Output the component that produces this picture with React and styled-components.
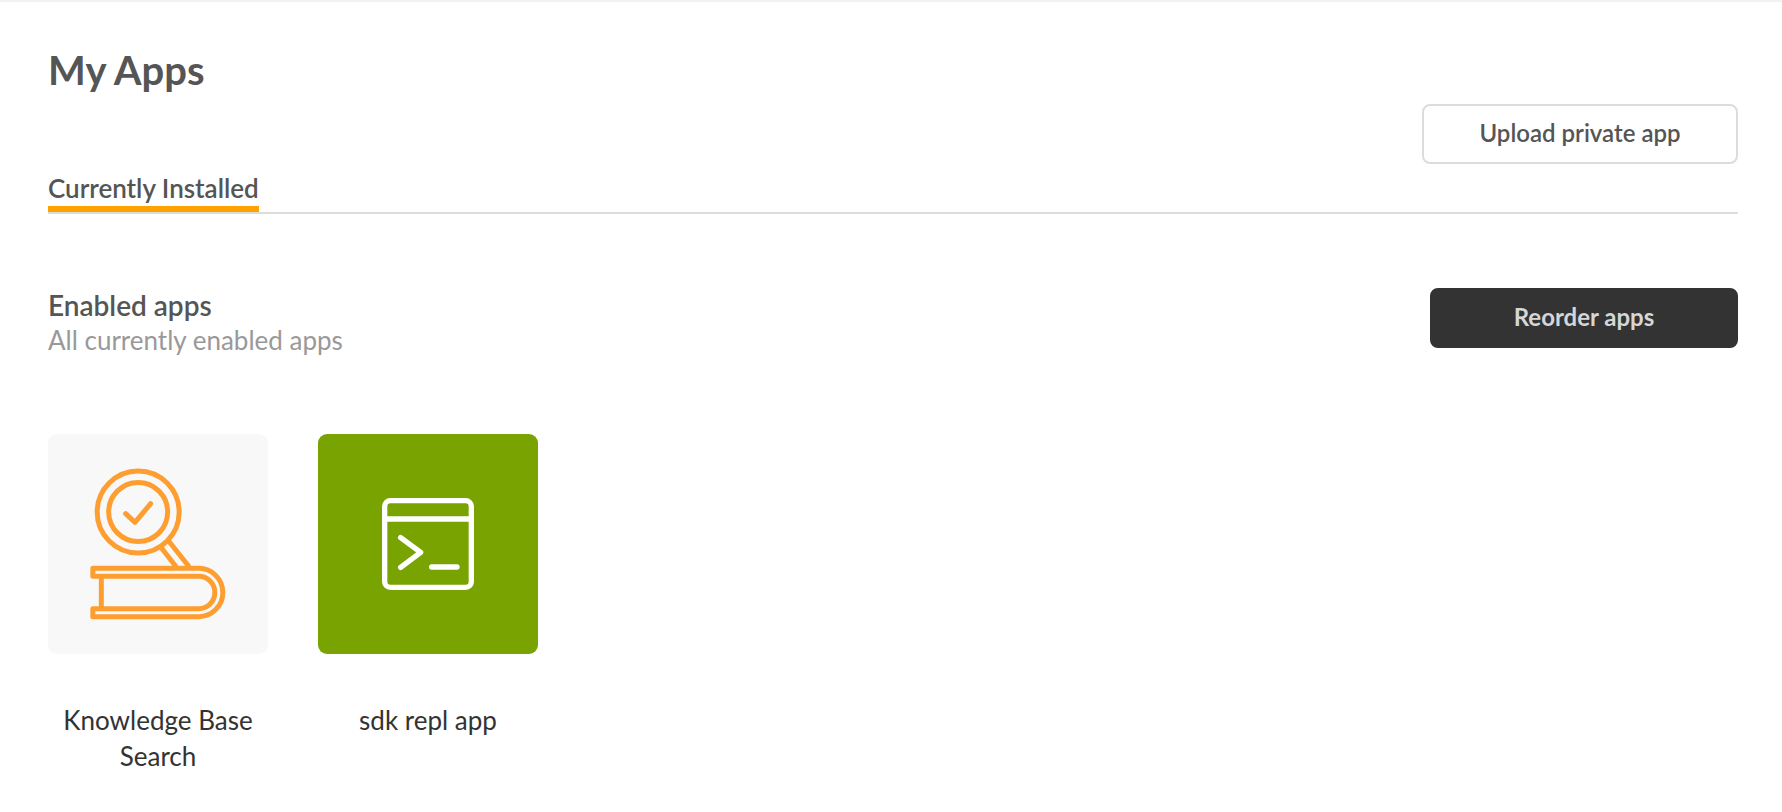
import React from 'react';
import styled, { createGlobalStyle } from 'styled-components';

const GlobalStyle = createGlobalStyle`
  * {
    box-sizing: border-box;
  }

  body {
    margin: 0;
    background: #fff;
    color: #555;
    font-family: Lato, 'Open Sans', sans-serif;
    font-size: 26px;
    line-height: 36px;
  }
`;

const Page = styled.main`
  border-top: 2px solid #f2f2f2;
  padding: 42px 44px 40px 48px;
`;

const Title = styled.h1`
  margin: 0;
  font-size: 40px;
  font-weight: 700;
  line-height: 52px;
`;

const Header = styled.header`
  display: grid;
  grid-template-columns: 1fr auto;
  border-bottom: 2px solid #dcdcdc;
`;

const HeaderAction = styled.div`
  grid-column: 2;
  grid-row: 1 / span 2;
  padding: 60px 0 48px;
`;

const Tabs = styled.nav`
  display: flex;
  align-items: flex-end;
`;

const Tab = styled.a`
  border-bottom: 6px solid #ffa200;
  color: inherit;
  font-weight: 600;
  text-decoration: none;
`;

const Button = styled.button`
  width: ${({ $primary }) => ($primary ? '308px' : '316px')};
  height: 60px;
  padding: 0 0 4px;
  border: 2px solid ${({ $primary }) => ($primary ? '#333' : '#dcdcdc')};
  border-radius: 8px;
  background: ${({ $primary }) => ($primary ? '#333' : '#fff')};
  color: ${({ $primary }) => ($primary ? '#d6d6d6' : '#555')};
  font-family: inherit;
  font-size: 24px;
  font-weight: ${({ $primary }) => ($primary ? 700 : 600)};
  cursor: pointer;
`;

const SectionHeader = styled.div`
  display: flex;
  align-items: flex-start;
  justify-content: space-between;
  padding: 74px 0 76px;
`;

const SectionTitle = styled.h2`
  margin: 0;
  font-size: 28px;
  font-weight: 600;
  line-height: 34px;
`;

const SectionText = styled.p`
  margin: 0;
  color: #999;
`;

const AppList = styled.ul`
  display: flex;
  flex-wrap: wrap;
  gap: 50px;
  margin: 0;
  padding: 0;
  list-style: none;
`;

const AppItem = styled.li`
  width: 220px;
  color: #333;
  text-align: center;
`;

const AppTile = styled.div`
  height: 220px;
  margin-bottom: 48px;
  border-radius: 9px;
  background: ${({ $color }) => $color};

  svg {
    display: block;
    width: 100%;
    height: 100%;
  }
`;

const KnowledgeIcon = () => (
  <svg viewBox="24 27 660 660" fill="none" stroke="#ff9e30" strokeWidth="15" aria-hidden="true">
    <circle cx="294.5" cy="261" r="123" />
    <circle cx="294.5" cy="261" r="88.5" />
    <path d="M257 266l28 26 47-56" strokeLinecap="round" strokeLinejoin="round" />
    <path d="M362 366l47 60M386 348l62 78" />
    <path
      d="M158.500 430H476a72.500 72.500 0 0 1 0 145H158.500V551H476a48.500 48.500 0 0 0 0-97H158.500z"
      strokeLinejoin="round"
    />
    <path d="M184 454v97" />
  </svg>
);

const TerminalIcon = () => (
  <svg
    viewBox="24 27 660 660"
    fill="none"
    stroke="#fff"
    strokeWidth="16"
    strokeLinecap="round"
    strokeLinejoin="round"
    aria-hidden="true"
  >
    <rect x="224" y="227" width="260" height="260" rx="17" />
    <path d="M224 282h260M272 338l60 44-60 45M365 426h76" />
  </svg>
);

const apps = [
  { name: 'Knowledge Base Search', color: '#f8f8f8', Icon: KnowledgeIcon },
  { name: 'sdk repl app', color: '#78a300', Icon: TerminalIcon },
];

const App = () => {
  return (
    <>
      <GlobalStyle />
      <Page>
        <Header>
          <Title>My Apps</Title>
          <HeaderAction>
            <Button type="button">Upload private app</Button>
          </HeaderAction>
          <Tabs>
            <Tab href="#installed">Currently Installed</Tab>
          </Tabs>
        </Header>
        <SectionHeader>
          <div>
            <SectionTitle>Enabled apps</SectionTitle>
            <SectionText>All currently enabled apps</SectionText>
          </div>
          <Button type="button" $primary>Reorder apps</Button>
        </SectionHeader>
        <AppList>
          {apps.map(({ name, color, Icon }) => (
            <AppItem key={name}>
              <AppTile $color={color}>
                <Icon />
              </AppTile>
              {name}
            </AppItem>
          ))}
        </AppList>
      </Page>
    </>
  );
};

export default App;
